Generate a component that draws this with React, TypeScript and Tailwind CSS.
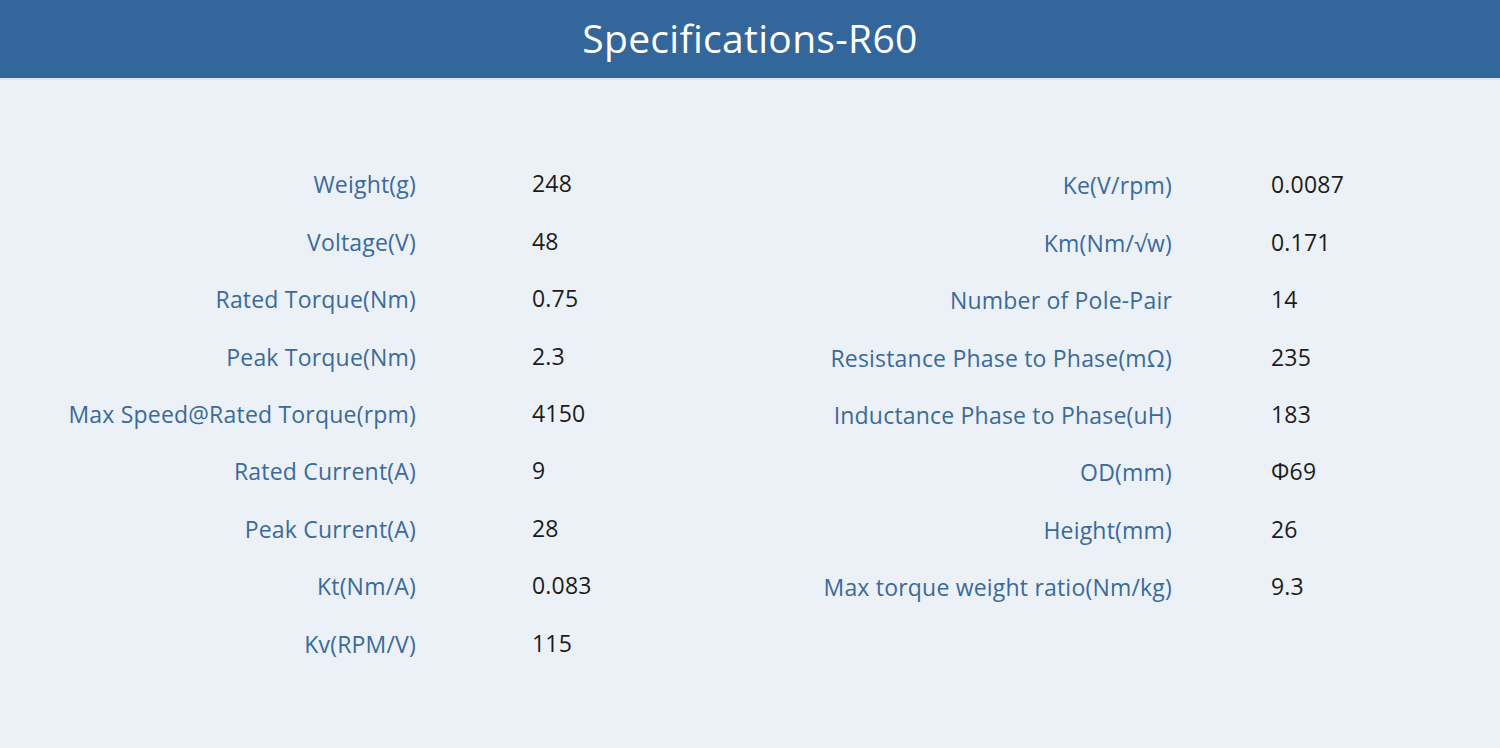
const left: [string, string][] = [
  ["Weight(g)", "248"],
  ["Voltage(V)", "48"],
  ["Rated Torque(Nm)", "0.75"],
  ["Peak Torque(Nm)", "2.3"],
  ["Max Speed@Rated Torque(rpm)", "4150"],
  ["Rated Current(A)", "9"],
  ["Peak Current(A)", "28"],
  ["Kt(Nm/A)", "0.083"],
  ["Kv(RPM/V)", "115"],
];

const right: [string, string][] = [
  ["Ke(V/rpm)", "0.0087"],
  ["Km(Nm/\u221Aw)", "0.171"],
  ["Number of Pole-Pair", "14"],
  ["Resistance Phase to Phase(m\u03A9)", "235"],
  ["Inductance Phase to Phase(uH)", "183"],
  ["OD(mm)", "\u03A669"],
  ["Height(mm)", "26"],
  ["Max torque weight ratio(Nm/kg)", "9.3"],
];

function SpecRow({ label, value, labelW, gap }: { label: string; value: string; labelW: string; gap: string }) {
  return (
    <div className="flex h-[57.4px] items-center">
      <div className={`${labelW} shrink-0 text-right text-[#3a6a9b]`}>{label}</div>
      <div className={`${gap} -mt-[2px] text-[#1c1c1c]`}>{value}</div>
    </div>
  );
}

export default function App() {
  return (
    <div className="min-h-[748px] w-[1500px] bg-[#ecf1f7] font-['Open_Sans',sans-serif]">
      <div className="border-b-2 border-[#dbe6f1] bg-[#33669a]">
        <h1 className="flex h-[78px] items-center justify-center pb-[1px] text-[39px] tracking-[0.3px] text-white">
          Specifications-R60
        </h1>
      </div>
      <div className="flex pt-[76px] text-[23px] tracking-[0.2px]">
        <div className="w-[750px]">
          {left.map(([l, v]) => (
            <SpecRow key={l} label={l} value={v} labelW="w-[416px]" gap="ml-[116px]" />
          ))}
        </div>
        <div className="w-[750px] pt-[1px]">
          {right.map(([l, v]) => (
            <SpecRow key={l} label={l} value={v} labelW="w-[422px]" gap="ml-[99px]" />
          ))}
        </div>
      </div>
    </div>
  );
}
